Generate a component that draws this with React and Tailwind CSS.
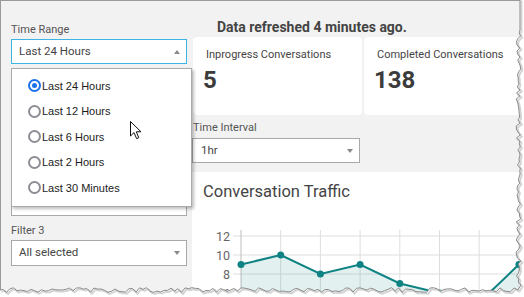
import { useState } from "react";

const TIME_OPTIONS = [
  "Last 24 Hours",
  "Last 12 Hours",
  "Last 6 Hours",
  "Last 2 Hours",
  "Last 30 Minutes",
];

const TRAFFIC = [9, 10, 8, 9, 7, 6, 5, 9];

/* small seeded random so the torn edge is the same every render */
function seeded(seed) {
  let s = seed;
  return () => {
    s = (s * 9301 + 49297) % 233280;
    return s / 233280;
  };
}

function tornPoints() {
  const r = seeded(11);
  const pts = [[520, -1], [520, 30]];
  for (let y = 33; y <= 287; y += 3) {
    pts.push([516 + r() * 5, y]);
  }
  pts.push([518, 290]);
  for (let x = 514; x >= 0; x -= 3.5) {
    pts.push([x, 287.5 + r() * 5]);
  }
  pts.push([0, 290]);
  return pts;
}

function TornEdge() {
  const pts = tornPoints();
  const line = pts.map(([x, y]) => `${x.toFixed(1)},${y.toFixed(1)}`).join(" ");
  const shadow = pts.map(([x, y]) => `${(x + 1.5).toFixed(1)},${(y + 1.5).toFixed(1)}`).join(" ");
  return (
    <svg className="pointer-events-none absolute left-0 top-0" width="524" height="297">
      <polygon points={`525,-1 ${line} 0,298 525,298`} fill="#ffffff" />
      <polyline points={shadow} fill="none" stroke="#d4d4d4" strokeWidth="2" />
      <polyline points={line} fill="none" stroke="#8c8c8c" strokeWidth="1" />
    </svg>
  );
}

function Cursor() {
  return (
    <svg className="pointer-events-none absolute left-[130px] top-[121px] z-20" width="13" height="19" viewBox="0 0 13 19">
      <path d="M0.5 0.5 L0.5 15 L4 11.6 L6.6 17.6 L8.8 16.7 L6.3 10.8 L11 10.8 Z" fill="#fff" stroke="#111" strokeWidth="1" strokeLinejoin="round" />
    </svg>
  );
}

function Caret({ up }) {
  return (
    <span
      className={`h-0 w-0 border-x-[3px] border-x-transparent ${
        up ? "border-b-[4px] border-b-[#8a8a8a]" : "border-t-[4px] border-t-[#8a8a8a]"
      }`}
    />
  );
}

function Field({ label, value, className = "", active, up, boxClass = "h-[26px]" }) {
  return (
    <div className={className}>
      <div className="mb-[2px] text-[11px] leading-[14px] text-[#555]">{label}</div>
      <div
        className={`flex items-center justify-between bg-white pl-[7px] pr-[6px] text-[11.5px] text-[#444] ${boxClass} ${
          active ? "border border-[#3cb4e5]" : "border border-[#a9a9a9]"
        }`}
      >
        <span>{value}</span>
        <Caret up={up} />
      </div>
    </div>
  );
}

function Radio({ checked }) {
  return checked ? (
    <span className="flex h-[13px] w-[13px] shrink-0 items-center justify-center rounded-full border-2 border-[#1a73e8] bg-white">
      <span className="h-[5px] w-[5px] rounded-full bg-[#1a73e8]" />
    </span>
  ) : (
    <span className="h-[13px] w-[13px] shrink-0 rounded-full border-2 border-[#8d8d95] bg-white" />
  );
}

function RangeMenu({ selected }) {
  return (
    <div className="absolute left-[10px] top-[67px] z-10 h-[139px] w-[181px] border border-[#ababab] bg-white pt-[4px] pl-[16px] shadow-[2px_2px_3px_rgba(0,0,0,0.25)]">
      {TIME_OPTIONS.map((opt) => (
        <div key={opt} className="flex h-[25.5px] items-center font-['Liberation_Sans',sans-serif] text-[11px] text-[#1c1c1c]">
          <Radio checked={opt === selected} />
          <span className="ml-[1px]">{opt}</span>
        </div>
      ))}
    </div>
  );
}

function StatCard({ title, value, className = "" }) {
  return (
    <div className={`h-[78px] rounded-[4px] bg-white pt-[11px] pl-[10px] ${className}`}>
      <div className="ml-[3px] text-[11px] leading-[14px] text-[#444]">{title}</div>
      <div className="mt-[4px] text-[24px] font-bold leading-[28px] text-[#3c3c3c]">{value}</div>
    </div>
  );
}

function TrafficChart() {
  const xs = TRAFFIC.map((_, i) => 49 + i * 39.7);
  const yOf = (v) => 26 + (12 - v) * 9.5;
  const pts = TRAFFIC.map((v, i) => [xs[i], yOf(v)]);
  const line = pts.map(([x, y]) => `${x},${y}`).join(" ");
  return (
    <svg width="332" height="87" className="block">
      {[12, 10, 8, 6].map((v) => (
        <g key={v}>
          <line x1="41" x2="332" y1={yOf(v)} y2={yOf(v)} stroke="#dedede" strokeWidth="1" />
          <text x="38" y={yOf(v) + 4.5} textAnchor="end" fontSize="12.5" fill="#666" fontFamily="Roboto, sans-serif">
            {v}
          </text>
        </g>
      ))}
      {xs.map((x, i) => (
        <line key={x} x1={x} x2={x} y1="20" y2="90" stroke={i === 0 ? "#bdbdbd" : "#dedede"} strokeWidth="1" />
      ))}
      <polygon points={`${xs[0]},120 ${line} ${xs[xs.length - 1]},120`} fill="#0f8383" fillOpacity="0.12" />
      <polyline points={line} fill="none" stroke="#0f8383" strokeWidth="2" />
      {pts.map(([x, y]) => (
        <circle key={x} cx={x} cy={y} r="3.5" fill="#0f8383" />
      ))}
    </svg>
  );
}

export default function App() {
  const [range] = useState("Last 24 Hours");

  return (
    <div className="relative h-[297px] w-[524px] overflow-hidden bg-white font-['Roboto',sans-serif]">
      <div className="flex h-full border-l border-t border-[#9a9a9a] bg-[#f2f2f2]">
        {/* Filters */}
        <aside className="relative w-[190px] shrink-0 pl-[10px] pt-[22px]">
          <Field label="Time Range" value={range} active up boxClass="h-[25px] w-[176px]" />
          {/* field hidden under the open menu, only its lower edge shows */}
          <div className="mt-[127px] h-[25px] w-[176px] border border-[#a9a9a9] bg-white" />
          <Field label="Filter 3" value="All selected" className="mt-[8px]" boxClass="h-[26px] w-[176px]" />
          <RangeMenu selected={range} />
        </aside>

        {/* Dashboard */}
        <main className="flex min-w-0 flex-1 flex-col">
          <div className="h-[36px] pl-[26px] pt-[18px] text-[14px] font-bold leading-[16px] text-[#444]">
            Data refreshed 4 minutes ago.
          </div>

          <div className="ml-[2px] flex gap-[2px]">
            <StatCard title="Inprogress Conversations" value="5" className="w-[169px] shrink-0" />
            <StatCard title="Completed Conversations" value="138" className="flex-1" />
          </div>

          <div className="ml-[1px] mt-[6px]">
            <div className="mb-[3px] ml-[1px] text-[11px] leading-[14px] text-[#555]">Time Interval</div>
            <div className="flex h-[25px] w-[168px] items-center justify-between border border-[#a9a9a9] bg-white pl-[8px] pr-[6px] text-[11.5px] text-[#444]">
              <span>1hr</span>
              <Caret />
            </div>
          </div>

          <div className="ml-[1px] mt-[9px] flex-1 bg-white">
            <h2 className="pl-[11px] pt-[10px] text-[16.5px] leading-[20px] text-[#444]">Conversation Traffic</h2>
            <div className="mt-[8px]">
              <TrafficChart />
            </div>
          </div>
        </main>
      </div>

      <Cursor />
      <TornEdge />
    </div>
  );
}
